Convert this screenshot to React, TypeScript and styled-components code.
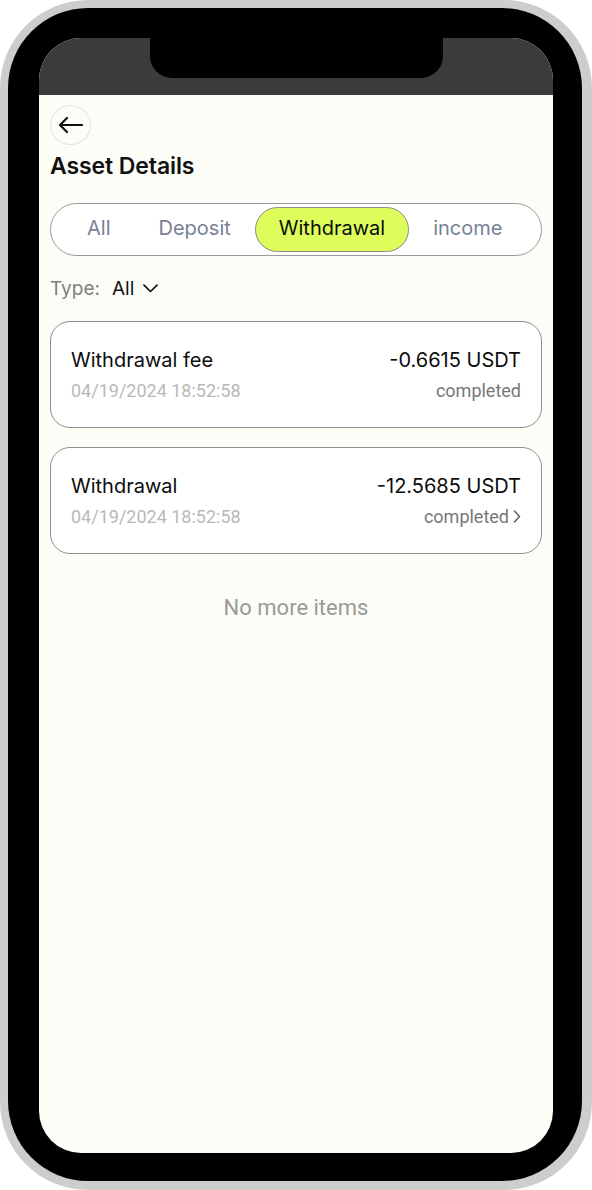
import React from "react";
import styled, { createGlobalStyle } from "styled-components";

const GlobalStyle = createGlobalStyle`
  html, body { margin: 0; padding: 0; background: #ffffff; }
  * { box-sizing: border-box; }
`;

const Phone = styled.div`
  width: 592px;
  height: 1190px;
  padding: 8px 10px 9px 8px;
  background: #cdcdcd;
  border-radius: 88px;
`;

const Bezel = styled.div`
  height: 100%;
  padding: 30px 29px 28px 31px;
  background: #000;
  border-radius: 80px;
`;

const Screen = styled.div`
  height: 100%;
  background: #fdfdf7;
  border-radius: 42px;
  overflow: hidden;
  display: flex;
  flex-direction: column;
  font-family: Inter, "Noto Sans", sans-serif;
`;

const StatusBar = styled.div`
  height: 57px;
  flex: none;
  background: #3b3b3b;
  display: flex;
  justify-content: center;
`;

const Notch = styled.div`
  width: 293px;
  height: 40px;
  background: #000;
  border-radius: 0 0 22px 22px;
`;

const Content = styled.div`
  padding: 10px 11px 0;
  display: flex;
  flex-direction: column;
`;

const BackButton = styled.button`
  width: 41px;
  height: 40px;
  border: 1.5px solid #e4e4dd;
  border-radius: 50%;
  background: transparent;
  display: flex;
  align-items: center;
  justify-content: center;
  padding: 0;
  cursor: pointer;
`;

const Title = styled.h1`
  margin: 7px 0 0;
  font-size: 23px;
  line-height: 28px;
  font-weight: 600;
  color: #111;
  letter-spacing: -0.1px;
`;

const Tabs = styled.div`
  margin-top: 23px;
  height: 53px;
  border: 1px solid #9a9a9a;
  border-radius: 27px;
  background: #fff;
  padding: 3px 12px;
  display: flex;
  align-items: stretch;
`;

const Tab = styled.div<{ $active?: boolean }>`
  padding: 0 23px 3px;
  display: flex;
  align-items: center;
  font-size: 20px;
  border-radius: 23px;
  color: ${(p) => (p.$active ? "#0c0c0c" : "#768196")};
  background: ${(p) => (p.$active ? "#dcfd5a" : "transparent")};
  border: 1px solid ${(p) => (p.$active ? "#8a8a8a" : "transparent")};
`;

const TypeRow = styled.div`
  margin-top: 20px;
  height: 24px;
  display: flex;
  align-items: center;
  font-size: 19px;
`;

const TypeLabel = styled.span`
  color: #808080;
  margin-right: 12px;
`;

const TypeValue = styled.span`
  color: #111;
  margin-right: 9px;
`;

const List = styled.div`
  margin-top: 21px;
  display: flex;
  flex-direction: column;
  gap: 19px;
`;

const Card = styled.div`
  height: 107px;
  border: 1px solid #8e8e8e;
  border-radius: 20px;
  background: #fff;
  padding: 0 20px;
  display: flex;
  justify-content: space-between;
  align-items: center;
`;

const Col = styled.div<{ $right?: boolean }>`
  display: flex;
  flex-direction: column;
  gap: 8px;
  align-items: ${(p) => (p.$right ? "flex-end" : "flex-start")};
`;

const Name = styled.div`
  font-size: 20px;
  line-height: 24px;
  color: #0c0c0c;
`;

const DateText = styled.div`
  font-family: Roboto, sans-serif;
  font-size: 18px;
  line-height: 22px;
  color: #b9b9b9;
`;

const Status = styled.div`
  font-family: Roboto, sans-serif;
  font-size: 18px;
  line-height: 22px;
  color: #777;
  display: flex;
  align-items: center;
  gap: 4px;
`;

const NoMore = styled.div`
  margin-top: 41px;
  text-align: center;
  font-family: Roboto, sans-serif;
  font-size: 22px;
  line-height: 26px;
  color: #9a9a9a;
`;

const ArrowLeft = () => (
  <svg width="25" height="18" viewBox="0 0 25 18" fill="none">
    <path d="M24 9H2M9 2L2 9l7 7" stroke="#111" strokeWidth="2.2" strokeLinecap="round" strokeLinejoin="round" />
  </svg>
);

const ChevronDown = () => (
  <svg width="15" height="9" viewBox="0 0 15 9" fill="none">
    <path d="M1 1.2l6.5 6.3L14 1.2" stroke="#111" strokeWidth="1.7" strokeLinecap="round" strokeLinejoin="round" />
  </svg>
);

const ChevronRight = () => (
  <svg width="8" height="13" viewBox="0 0 8 13" fill="none">
    <path d="M1.5 1l5 5.5-5 5.5" stroke="#666" strokeWidth="1.6" strokeLinecap="round" strokeLinejoin="round" />
  </svg>
);

const records = [
  { name: "Withdrawal fee", date: "04/19/2024 18:52:58", amount: "-0.6615 USDT", link: false },
  { name: "Withdrawal", date: "04/19/2024 18:52:58", amount: "-12.5685 USDT", link: true },
];

const tabs = ["All", "Deposit", "Withdrawal", "income"];

export default function App() {
  return (
    <>
      <GlobalStyle />
      <Phone>
        <Bezel>
          <Screen>
            <StatusBar>
              <Notch />
            </StatusBar>
            <Content>
              <BackButton aria-label="back">
                <ArrowLeft />
              </BackButton>
              <Title>Asset Details</Title>
              <Tabs>
                {tabs.map((t) => (
                  <Tab key={t} $active={t === "Withdrawal"}>
                    {t}
                  </Tab>
                ))}
              </Tabs>
              <TypeRow>
                <TypeLabel>Type:</TypeLabel>
                <TypeValue>All</TypeValue>
                <ChevronDown />
              </TypeRow>
              <List>
                {records.map((r) => (
                  <Card key={r.name}>
                    <Col>
                      <Name>{r.name}</Name>
                      <DateText>{r.date}</DateText>
                    </Col>
                    <Col $right>
                      <Name>{r.amount}</Name>
                      <Status>
                        completed
                        {r.link && <ChevronRight />}
                      </Status>
                    </Col>
                  </Card>
                ))}
              </List>
              <NoMore>No more items</NoMore>
            </Content>
          </Screen>
        </Bezel>
      </Phone>
    </>
  );
}
